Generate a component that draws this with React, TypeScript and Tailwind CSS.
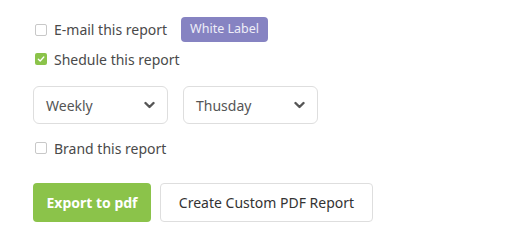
import React from 'react';

const Checkbox = ({ checked }: { checked?: boolean }) =>
    checked ? (
        <span className="flex h-[12px] w-[12px] items-center justify-center rounded-[2px] bg-[#8bc34a]">
            <svg width="8" height="8" viewBox="0 0 8 8" fill="none">
                <polyline points="1.3,4.2 3.2,6 6.8,2" stroke="#fff" strokeWidth="1.3" strokeLinecap="round" strokeLinejoin="round" />
            </svg>
        </span>
    ) : (
        <span className="block h-[12px] w-[12px] rounded-[2px] border border-[#c8c8c8] bg-white" />
    );

const Chevron = () => (
    <svg width="11" height="8" viewBox="0 0 11 8" fill="none">
        <polyline points="1.5,2 5.5,6 9.5,2" stroke="#555" strokeWidth="2.4" strokeLinecap="round" strokeLinejoin="round" />
    </svg>
);

const Select = ({ value }: { value: string }) => (
    <div className="flex h-[38px] w-[135px] items-center justify-between rounded-[6px] border border-[#dedede] bg-white pl-[12px] pr-[12px] text-[14px] text-[#555]">
        <span>{value}</span>
        <Chevron />
    </div>
);

const App: React.FC = () => {
    return (
        <div className="h-[240px] w-[507px] bg-white pl-[33px] pt-[17px] text-[#4a4a4a]" style={{ fontFamily: '"Noto Sans", sans-serif' }}>
            <div className="flex h-[25px] items-center">
                <div className="ml-[2px]"><Checkbox /></div>
                <span className="ml-[7px] text-[14px]">E-mail this report</span>
                <span className="ml-[14px] flex h-[25px] w-[87px] items-center justify-center rounded-[4px] bg-[#8683c2] text-[12.5px] text-[#eeeef8]">White Label</span>
            </div>
            <div className="mt-[6px] flex h-[22px] items-center">
                <div className="ml-[2px]"><Checkbox checked /></div>
                <span className="ml-[7px] text-[14px]">Shedule this report</span>
            </div>
            <div className="mt-[16px] flex gap-[15px]">
                <Select value="Weekly" />
                <Select value="Thusday" />
            </div>
            <div className="mt-[13px] flex h-[22px] items-center">
                <div className="ml-[2px]"><Checkbox /></div>
                <span className="ml-[7px] text-[14px]">Brand this report</span>
            </div>
            <div className="mt-[24px] flex gap-[9px]">
                <button className="h-[39px] w-[118px] rounded-[4px] bg-[#8bc34a] text-[14px] font-bold text-white">Export to pdf</button>
                <button className="h-[39px] w-[213px] rounded-[4px] border border-[#dedede] bg-white text-[14px] text-[#333]">Create Custom PDF Report</button>
            </div>
        </div>
    );
};

export default App;
